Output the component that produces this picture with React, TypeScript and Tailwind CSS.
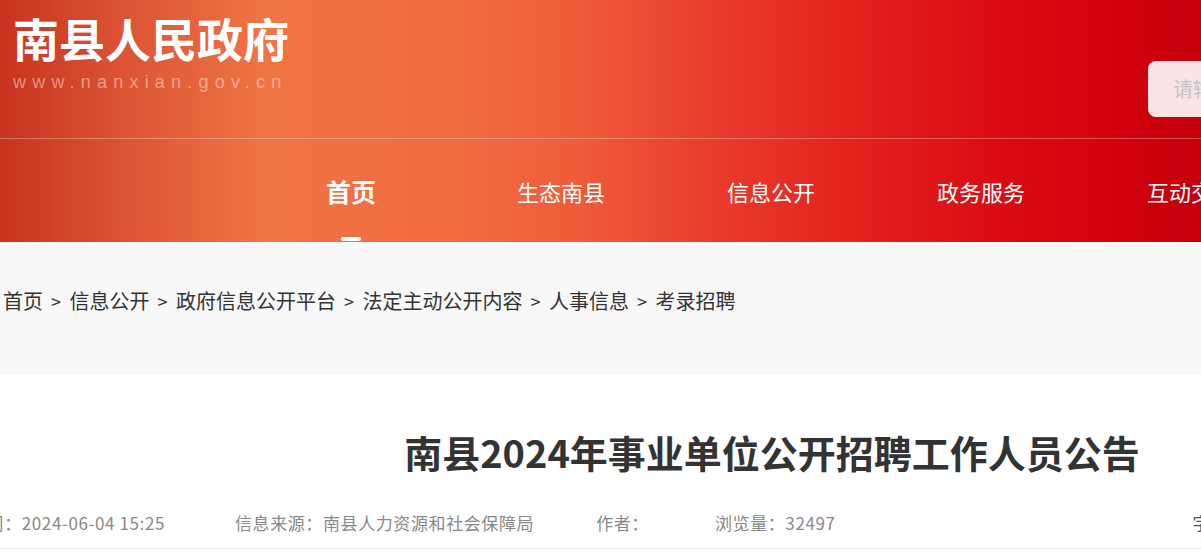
const navItems = ["首页", "生态南县", "信息公开", "政务服务", "互动交流"];

const crumbs = ["首页", "信息公开", "政府信息公开平台", "法定主动公开内容", "人事信息", "考录招聘"];

export default function App() {
  return (
    <div
      className="w-[1201px] h-[553px] overflow-hidden bg-white"
      style={{ fontFamily: '"Noto Sans CJK SC", "Noto Sans", sans-serif' }}
    >
      {/* header */}
      <div className="h-[242px] flex flex-col bg-[linear-gradient(90deg,#c8331f_0%,#dc5636_11%,#f07444_22%,#f06c41_38%,#ef5c3a_48%,#e83a2c_60%,#e2201c_72%,#da0a12_84%,#d3020d_92%,#c4000c_100%)]">
        <div className="h-[138px] flex items-start">
          <div className="pl-[13px] shrink-0">
            <div className="mt-[12px] text-[46px] leading-[50px] font-bold text-white">
              南县人民政府
            </div>
            <div
              className="mt-[8px] text-[18px] leading-[24px] tracking-[6.2px] text-white/45"
              style={{ fontFamily: '"Liberation Sans", Arial, sans-serif' }}
            >
              www.nanxian.gov.cn
            </div>
          </div>
          <div className="ml-auto mr-[-267px] mt-[61px] w-[320px] h-[56px] shrink-0 rounded-lg bg-[#f9e3e4] flex items-center pl-[25px]">
            <span className="text-[20px] text-[#c4c4c4]">请输入关键词</span>
          </div>
        </div>
        <div className="h-px bg-white/30" />
        <nav className="flex-1 flex pl-[246px]">
          {navItems.map((item, i) => (
            <div key={item} className="w-[210px] shrink-0 flex flex-col items-center pt-[36px]">
              <span
                className={
                  i === 0
                    ? "text-[25px] leading-[32px] font-bold text-white"
                    : "text-[22px] leading-[32px] text-white"
                }
              >
                {item}
              </span>
              {i === 0 && <span className="mt-auto mb-px w-5 h-1 rounded-full bg-white" />}
            </div>
          ))}
        </nav>
      </div>

      {/* breadcrumb */}
      <div className="h-[133px] bg-[#f8f8f8] pl-[3px] pt-[47px]">
        <div className="flex items-center text-[20px] leading-[24px] text-[#333]">
          {crumbs.map((c, i) => (
            <span key={c} className="flex items-center">
              {i > 0 && <span className="ml-[8px] mr-[8.5px] text-[18px]">&gt;</span>}
              {c}
            </span>
          ))}
        </div>
      </div>

      {/* article head */}
      <div className="w-[1538px] ml-[3px]">
        <h1 className="pt-[54px] text-center text-[38px] leading-[46px] font-bold text-[#333]">
          南县2024年事业单位公开招聘工作人员公告
        </h1>
        <div className="mt-[36px] -ml-[34px] flex text-[17px] leading-[24px] tracking-[0.6px] text-[#888] pb-[13px]">
          <span className="mr-[70px]">时间：2024-06-04 15:25</span>
          <span className="mr-[62px]">信息来源：南县人力资源和社会保障局</span>
          <span className="mr-[66px]">作者：</span>
          <span className="mr-[357px]">浏览量：32497</span>
          <span className="text-[#555]">字号：大 中 小</span>
        </div>
      </div>
      <div className="h-px bg-[#ececec]" />
    </div>
  );
}
